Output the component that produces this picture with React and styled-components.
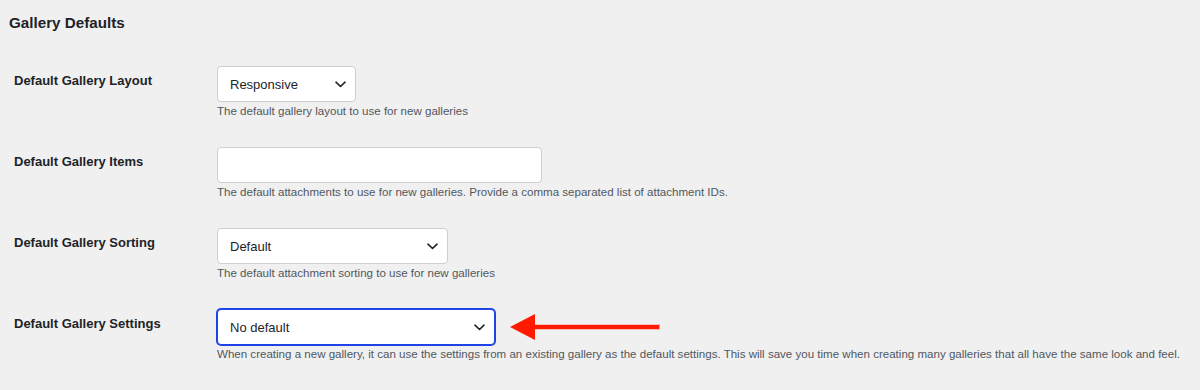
import React from "react";
import styled, { createGlobalStyle } from "styled-components";

const Global = createGlobalStyle`
  html, body { margin: 0; padding: 0; background: #f0f0f1; }
  body { font-family: "Liberation Sans", Arial, sans-serif; color: #1d2327; }
`;

const Page = styled.div`
  width: 1200px;
  height: 390px;
  box-sizing: border-box;
  padding: 13px 0 0 9px;
  background: #f0f0f1;
`;

const Heading = styled.h2`
  margin: 0;
  font-size: 15.2px;
  line-height: 20px;
  font-weight: 700;
  color: #1d2327;
`;

const Form = styled.div`
  display: grid;
  grid-template-columns: 203px 1fr;
  row-gap: 27px;
  margin-top: 33px;
  padding-left: 5px;
`;

const Label = styled.div`
  padding-top: 6px;
  font-size: 13px;
  line-height: 18px;
  font-weight: 700;
  color: #1d2327;
`;

const Field = styled.div`
  display: flex;
  flex-direction: column;
  align-items: flex-start;
`;

const Line = styled.div`
  display: flex;
  align-items: center;
`;

const Select = styled.div`
  box-sizing: border-box;
  width: ${(p) => p.$w}px;
  height: 36px;
  display: flex;
  align-items: center;
  justify-content: space-between;
  padding: 0 9px 0 12px;
  background: #fff;
  border: 1px solid ${(p) => (p.$focus ? "#1f43e4" : "#cfcfd2")};
  box-shadow: ${(p) => (p.$focus ? "0 0 0 1px #1f43e4" : "none")};
  border-radius: 4px;
  font-size: 13px;
  color: #1d2327;
`;

const Input = styled.div`
  box-sizing: border-box;
  width: ${(p) => p.$w}px;
  height: 36px;
  background: #fff;
  border: 1px solid #cfcfd2;
  border-radius: 4px;
`;

const Desc = styled.p`
  margin: 1px 0 0;
  font-size: 11.55px;
  line-height: 17px;
  color: #50575e;
  white-space: nowrap;
`;

const Arrow = styled.svg`
  margin-left: 15px;
  flex: none;
`;

const Chevron = () => (
  <svg width="11" height="7" viewBox="0 0 11 7">
    <path d="M1 1.2l4.5 4.3L10 1.2" fill="none" stroke="#1d2327" strokeWidth="1.6" strokeLinecap="round" strokeLinejoin="round" />
  </svg>
);

const rows = [
  { label: "Default Gallery Layout", kind: "select", w: 139, value: "Responsive", desc: "The default gallery layout to use for new galleries" },
  { label: "Default Gallery Items", kind: "input", w: 325, desc: "The default attachments to use for new galleries. Provide a comma separated list of attachment IDs." },
  { label: "Default Gallery Sorting", kind: "select", w: 231, value: "Default", desc: "The default attachment sorting to use for new galleries" },
  {
    label: "Default Gallery Settings",
    kind: "select",
    w: 278,
    value: "No default",
    focus: true,
    arrow: true,
    desc: "When creating a new gallery, it can use the settings from an existing gallery as the default settings. This will save you time when creating many galleries that all have the same look and feel.",
  },
];

export default function App() {
  return (
    <>
      <Global />
      <Page>
        <Heading>Gallery Defaults</Heading>
        <Form>
          {rows.map((r) => (
            <React.Fragment key={r.label}>
              <Label>{r.label}</Label>
              <Field>
                <Line>
                  {r.kind === "select" ? (
                    <Select $w={r.w} $focus={r.focus}>
                      <span>{r.value}</span>
                      <Chevron />
                    </Select>
                  ) : (
                    <Input $w={r.w} />
                  )}
                  {r.arrow && (
                    <Arrow width="152" height="28" viewBox="0 0 152 28">
                      <rect x="22" y="11.5" width="128" height="5" fill="#ff8a80" />
                      <rect x="22" y="12" width="127" height="4" fill="#ff1a00" />
                      <polygon points="0,14 25,1 25,27" fill="#ff1a00" />
                    </Arrow>
                  )}
                </Line>
                <Desc>{r.desc}</Desc>
              </Field>
            </React.Fragment>
          ))}
        </Form>
      </Page>
    </>
  );
}
